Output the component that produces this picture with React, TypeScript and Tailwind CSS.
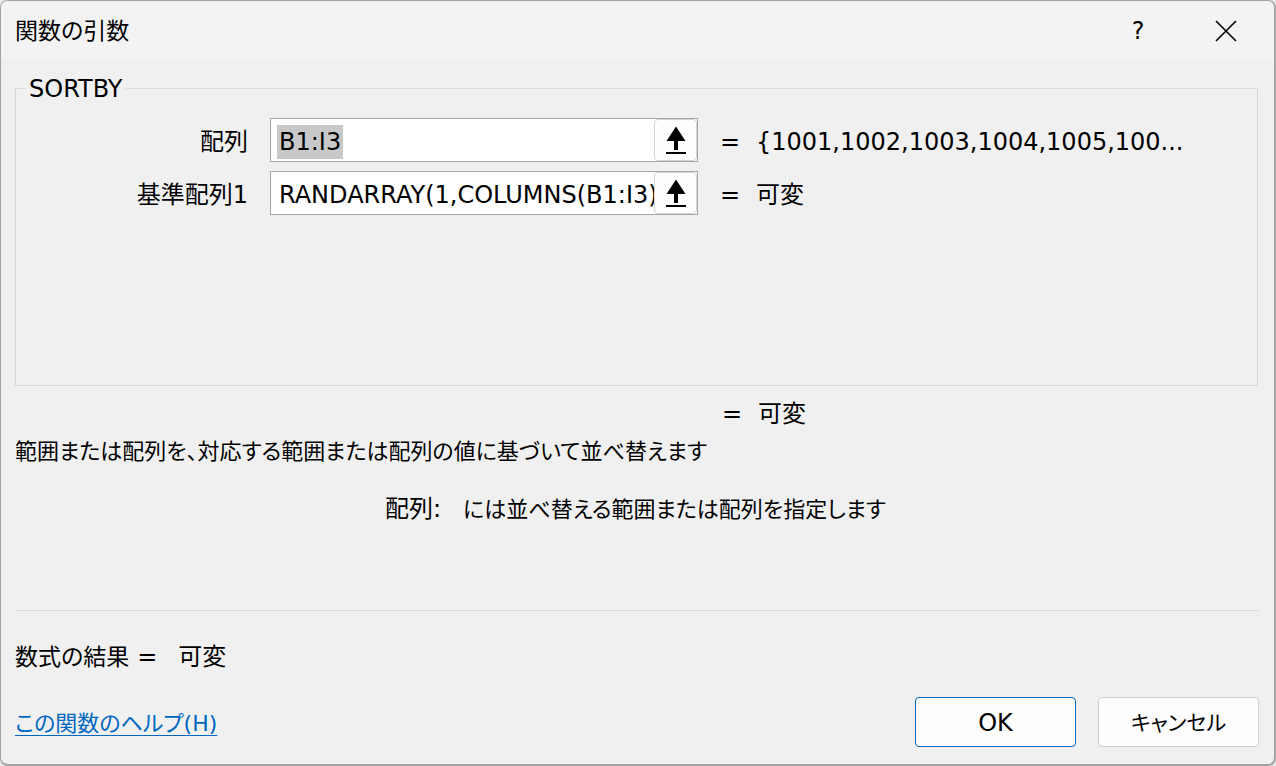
import React from 'react';

const UpArrow = () => (
  <svg width="22" height="30" viewBox="0 0 22 30">
    <path d="M11 1.5 L20.5 16 H13 V25 H9 V16 H1.5 Z" fill="#000" />
    <rect x="1" y="27" width="20" height="2" fill="#000" />
  </svg>
);

const RefInput = ({ value, selected }: { value: string; selected?: boolean }) => (
  <div className="w-[428px] h-[44px] bg-white border border-[#a6a6a6] flex items-center overflow-hidden">
    <div className="flex-1 min-w-0 overflow-hidden whitespace-nowrap pl-[6px] pt-[4px]">
      {selected ? <span className="bg-[#c8c8c8] px-[2px] py-[3px]">{value}</span> : <span className="pl-[2px]">{value}</span>}
    </div>
    <button className="w-[43px] h-[42px] shrink-0 bg-[#fdfdfd] border border-[#d4d4d4] rounded-[4px] flex items-center justify-center">
      <UpArrow />
    </button>
  </div>
);

const ArgRow = ({ label, value, result, selected }: { label: string; value: string; result: string; selected?: boolean }) => (
  <div className="flex items-center h-[44px]">
    <div className="w-[232px] text-right pt-[4px]">{label}</div>
    <div className="ml-[22px]">
      <RefInput value={value} selected={selected} />
    </div>
    <span className="ml-[22px] w-[16px] text-center pt-[4px]">=</span>
    <span className="ml-[20px] whitespace-nowrap pt-[4px]">{result}</span>
  </div>
);

export default function App() {
  return (
    <div className="w-[1276px] h-[766px] bg-[#e6e6e6] font-['DejaVu_Sans','Noto_Sans_CJK_JP',sans-serif] [font-feature-settings:'palt'] text-[24px] leading-[34px] text-black">
      <div className="w-full h-full bg-[#f0f0f0] border-l border-t border-r-2 border-b-2 border-[#a3a3a3] rounded-[8px] overflow-hidden flex flex-col">
        {/* title bar */}
        <div className="h-[57px] shrink-0 bg-[#f3f3f3] flex items-center pl-[14px] pt-[2px]">
          <span className="flex-1 text-[23px]">関数の引数</span>
          <span className="w-[30px] text-center mr-[62px]">?</span>
          <svg width="22" height="22" viewBox="0 0 22 22" className="mr-[37px]">
            <path d="M1 1 L21 21 M21 1 L1 21" stroke="#000" strokeWidth="1.6" />
          </svg>
        </div>

        <div className="flex flex-col pl-[14px] pr-[15px]">
          <fieldset className="mt-[12px] mr-[1px] border border-[#d9d9d9] p-0 m-0">
            <legend className="ml-[10px] px-[3px] pt-[2px] leading-[34px]">SORTBY</legend>
            <div className="flex flex-col gap-[9px] mt-[12px] pb-[170px]">
              <ArgRow label="配列" value="B1:I3" result="{1001,1002,1003,1004,1005,100..." selected />
              <ArgRow label="基準配列1" value="RANDARRAY(1,COLUMNS(B1:I3)))" result="可変" />
            </div>
          </fieldset>

          <div className="flex mt-[11px]">
            <span className="ml-[707px] w-[16px] text-center">=</span>
            <span className="ml-[20px]">可変</span>
          </div>

          <div className="mt-[4px] whitespace-nowrap text-[22px]">範囲または配列を、対応する範囲または配列の値に基づいて並べ替えます</div>

          <div className="mt-[23px] flex items-baseline whitespace-nowrap pl-[370px]">
            <span className="w-[78px]">配列:</span>
            <span className="text-[22px]">には並べ替える範囲または配列を指定します</span>
          </div>

          <div className="mt-[83px] h-px bg-[#dadada] mr-[1px]" />

          <div className="mt-[29px] flex whitespace-nowrap">
            <span className="text-[23px]">数式の結果</span>
            <span className="ml-[8px] w-[16px] text-center">=</span>
            <span className="ml-[25px]">可変</span>
          </div>

          <div className="mt-[23px] flex items-center h-[50px]">
            <a className="flex-1 pt-[4px] text-[22px] text-[#0067c0] underline underline-offset-[4px] decoration-1">この関数のヘルプ(H)</a>
            <button className="w-[161px] h-[50px] bg-[#fdfdfd] border border-[#0067c0] rounded-[4px] leading-none pt-[2px]">OK</button>
            <button className="ml-[22px] w-[161px] h-[50px] bg-[#fdfdfd] border border-[#d0d0d0] rounded-[4px] leading-none pt-[2px] text-[21px]">キャンセル</button>
          </div>
        </div>
      </div>
    </div>
  );
}
